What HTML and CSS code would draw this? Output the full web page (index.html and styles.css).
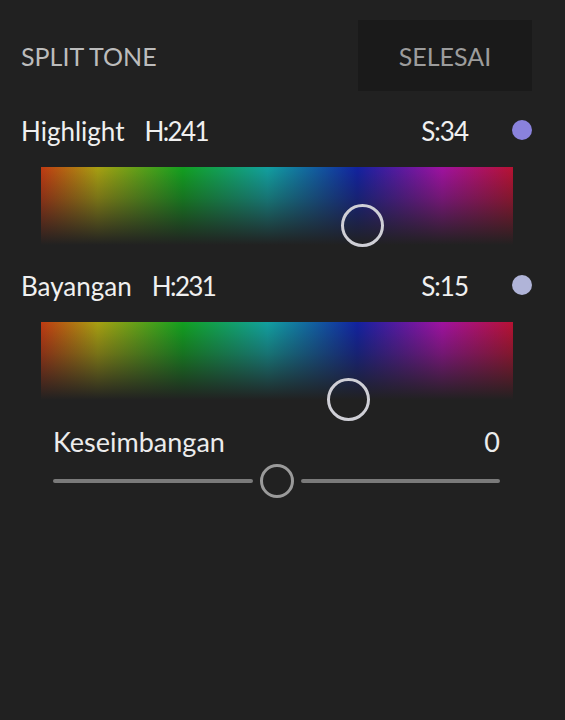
FILE: index.html
```html
<!DOCTYPE html>
<html lang="id">
<head>
<meta charset="utf-8">
<title>Split Tone</title>
<link rel="stylesheet" href="styles.css">
</head>
<body>
<div class="panel">
  <div class="header">
    <div class="title">SPLIT TONE</div>
    <div class="done">SELESAI</div>
  </div>

  <div class="tone-row first">
    <span class="tone-name">Highlight</span>
    <span class="tone-h">H:241</span>
    <span class="tone-s">S:34</span>
    <span class="swatch swatch-hi"></span>
  </div>
  <div class="hue-bar">
    <span class="thumb" style="left:322px; top:59px"></span>
  </div>

  <div class="tone-row">
    <span class="tone-name">Bayangan</span>
    <span class="tone-h">H:231</span>
    <span class="tone-s">S:15</span>
    <span class="swatch swatch-sh"></span>
  </div>
  <div class="hue-bar">
    <span class="thumb" style="left:308px; top:78px"></span>
  </div>

  <div class="balance">
    <div class="balance-head">
      <span>Keseimbangan</span>
      <span>0</span>
    </div>
    <div class="slider">
      <div class="track"></div>
      <div class="knob"></div>
      <div class="track"></div>
    </div>
  </div>
</div>
</body>
</html>
```

FILE: styles.css
```css
html, body {
  margin: 0;
  padding: 0;
  background: #212121;
}
body {
  width: 565px;
  height: 720px;
  font-family: Lato, "Open Sans", sans-serif;
  color: #f0f0f0;
}
.panel {
  padding: 20px 33px 0 21px;
}
.header {
  display: flex;
  justify-content: space-between;
  align-items: center;
  height: 71px;
}
.title {
  font-size: 25px;
  color: #bcbcbc;
}
.done {
  width: 174px;
  height: 71px;
  background: #1a1a1a;
  color: #9c9c9c;
  font-size: 25px;
  display: flex;
  align-items: center;
  justify-content: center;
}
.tone-row {
  display: flex;
  align-items: center;
  height: 40px;
  margin-top: 21px;
  font-size: 26px;
}
.tone-row.first {
  margin-top: 20px;
}
.tone-name {
  margin-right: 20px;
}
.tone-h {
  flex: 1;
  letter-spacing: -1.6px;
}
.tone-s {
  margin-right: 44px;
  letter-spacing: -1px;
}
.swatch {
  width: 20px;
  height: 20px;
  margin-top: -3px;
  border-radius: 50%;
}
.swatch-hi { background: #8a82dc; }
.swatch-sh { background: #b0b4d8; }
.hue-bar {
  position: relative;
  margin: 16px 19px 0 20px;
  height: 78px;
  background:
    linear-gradient(to bottom, rgba(33,33,33,0) 0%, rgba(33,33,33,0.35) 40%, rgba(33,33,33,1) 100%),
    linear-gradient(to right,
      #c03a12 0%,
      #a8a012 12%,
      #12a020 30%,
      #12a0a0 48%,
      #1222a0 67%,
      #a012a0 85%,
      #b81232 100%);
}
.thumb {
  position: absolute;
  width: 37px;
  height: 37px;
  margin: -22px 0 0 -22px;
  border: 3.5px solid #cfcfd6;
  border-radius: 50%;
}
.balance {
  margin: 21px 32px 0 32px;
}
.balance-head {
  display: flex;
  justify-content: space-between;
  align-items: center;
  height: 40px;
  font-size: 27px;
  color: #ececec;
}
.slider {
  display: flex;
  align-items: center;
  height: 40px;
}
.track {
  flex: 1;
  height: 4px;
  background: #7a7a7a;
  border-radius: 2px;
}
.knob {
  width: 28px;
  height: 28px;
  margin: 0 7px;
  border: 3px solid #9a9a9a;
  border-radius: 50%;
}
```
